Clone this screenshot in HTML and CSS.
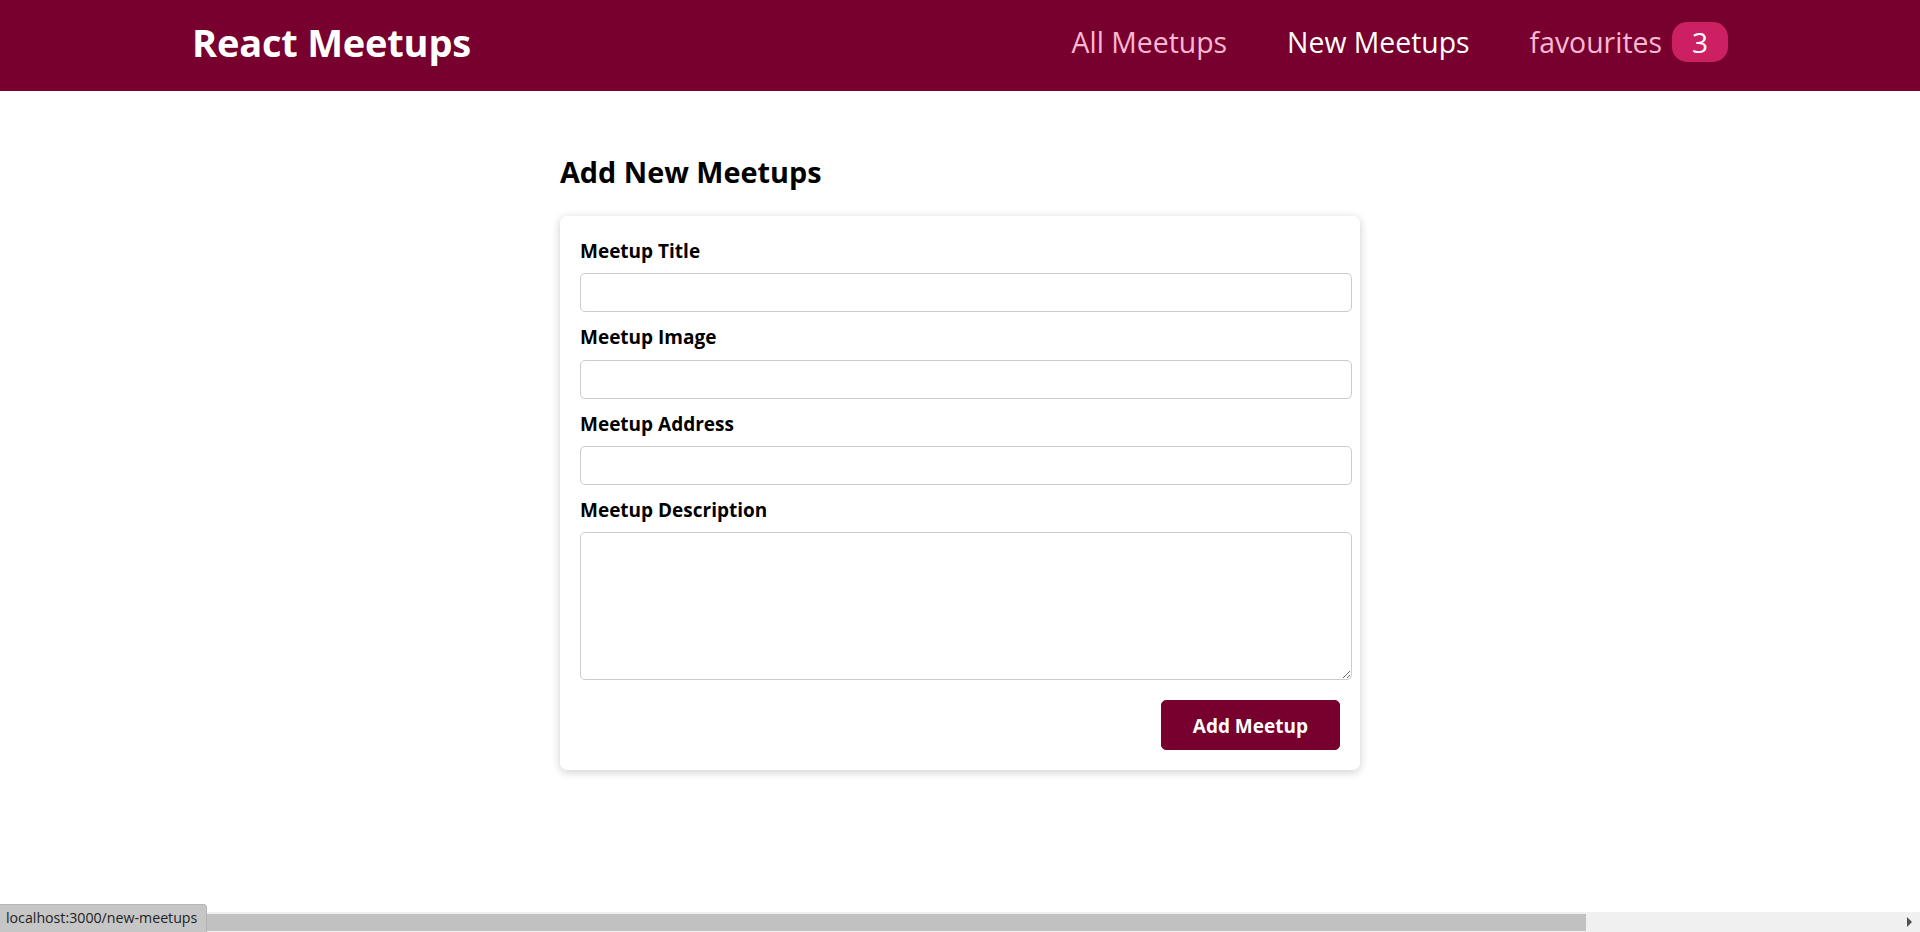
FILE: index.html
```html
<!DOCTYPE html>
<html lang="en">
<head>
<meta charset="utf-8">
<title>React Meetups</title>
<link rel="stylesheet" href="styles.css">
</head>
<body>
  <header class="header">
    <div class="logo">React Meetups</div>
    <nav>
      <ul class="nav-list">
        <li class="nav-item"><a class="nav-link" href="#">All Meetups</a></li>
        <li class="nav-item"><a class="nav-link active" href="#">New Meetups</a></li>
        <li class="nav-item"><a class="nav-link" href="#">favourites<span class="badge">3</span></a></li>
      </ul>
    </nav>
  </header>
  <main class="main">
    <section>
      <h2 class="page-title">Add New Meetups</h2>
      <div class="card">
        <form class="form">
          <div class="control">
            <label class="label" for="title">Meetup Title</label>
            <input class="field" type="text" id="title">
          </div>
          <div class="control">
            <label class="label" for="image">Meetup Image</label>
            <input class="field" type="url" id="image">
          </div>
          <div class="control">
            <label class="label" for="address">Meetup Address</label>
            <input class="field" type="text" id="address">
          </div>
          <div class="control">
            <label class="label" for="description">Meetup Description</label>
            <textarea class="field area" id="description" rows="5"></textarea>
          </div>
          <div class="actions">
            <button class="btn" type="button">Add Meetup</button>
          </div>
        </form>
      </div>
    </section>
  </main>
  <div class="status-tip">localhost:3000/new-meetups</div>
  <div class="hscroll">
    <div class="hscroll-thumb"></div>
    <div class="hscroll-arrow"></div>
  </div>
</body>
</html>
```
FILE: styles.css
```css
* {
  box-sizing: border-box;
}

html, body {
  margin: 0;
  padding: 0;
  overflow: hidden;
  height: 100%;
}

body {
  font-family: "Open Sans", "Noto Sans", sans-serif;
  font-size: 20px;
  line-height: 27.2px;
  color: #000;
  background: #fff;
}

.header {
  width: 100%;
  height: 91px;
  padding: 1px 192px 8px;
  display: flex;
  align-items: center;
  justify-content: space-between;
  background-color: #77002e;
}

.logo {
  font-size: 38px;
  line-height: 53px;
  font-weight: 700;
  color: #fff;
  letter-spacing: -0.2px;
}

.nav-list {
  list-style: none;
  margin: 0;
  padding: 0;
  display: flex;
  align-items: baseline;
}

.nav-item {
  margin-left: 60px;
}

.nav-link {
  text-decoration: none;
  font-size: 28.4px;
  line-height: 40px;
  color: #fcb8d2;
  display: inline-block;
}

.nav-link.active {
  color: #fff;
}

.badge {
  display: inline-block;
  background-color: #cc2062;
  color: #fff;
  border-radius: 15px;
  padding: 0 20px;
  margin-left: 10px;
  font-size: 28px;
  line-height: 40px;
}

.main {
  width: 800px;
  margin: 60px auto;
}

.page-title {
  margin: 0 0 25px;
  padding-top: 1px;
  height: 40px;
  font-size: 28.8px;
  line-height: 40px;
  font-weight: 700;
}

.card {
  background: #fff;
  border-radius: 7px;
  box-shadow: 0 2px 10px rgba(0, 0, 0, 0.2);
}

.form {
  padding: 20px;
}

.control {
  margin-bottom: 10px;
}

.label {
  display: block;
  font-weight: 700;
  font-size: 19px;
  padding-top: 2px;
  margin-bottom: 8px;
}

.field {
  display: block;
  box-sizing: content-box;
  font: inherit;
  width: 100%;
  padding: 5px;
  border: 1px solid #ccc;
  border-radius: 5px;
  height: 27.2px;
  margin: 0;
  background: #fff;
}

.field.area {
  height: 136px;
  resize: vertical;
}

.actions {
  margin-top: 20px;
  text-align: right;
}

.btn {
  font: inherit;
  font-size: 19px;
  font-weight: 700;
  cursor: pointer;
  background-color: #77002e;
  color: #fff;
  padding: 12px 31px 8px;
  height: 49.2px;
  border: 1px solid #77002e;
  border-radius: 5px;
}

.status-tip {
  position: fixed;
  left: 0;
  bottom: 0;
  height: 28px;
  padding: 0 10px 0 6px;
  background: #c6c6c6;
  border-top: 1px solid #b4b4b4;
  border-right: 1px solid #b4b4b4;
  border-top-right-radius: 4px;
  font-size: 14.2px;
  line-height: 26px;
  color: #222;
  z-index: 3;
  width: 207px;
  white-space: nowrap;
}

.hscroll {
  position: fixed;
  left: 0;
  right: 0;
  bottom: 0;
  height: 20px;
  background: #f0f0f0;
  z-index: 2;
  display: flex;
  align-items: center;
  justify-content: space-between;
}

.hscroll-thumb {
  width: 1586px;
  height: 17px;
  margin-top: 1px;
  background: #c1c1c1;
}

.hscroll-arrow {
  width: 0;
  height: 0;
  margin-right: 8px;
  border-top: 5px solid transparent;
  border-bottom: 5px solid transparent;
  border-left: 5px solid #505050;
}
```
